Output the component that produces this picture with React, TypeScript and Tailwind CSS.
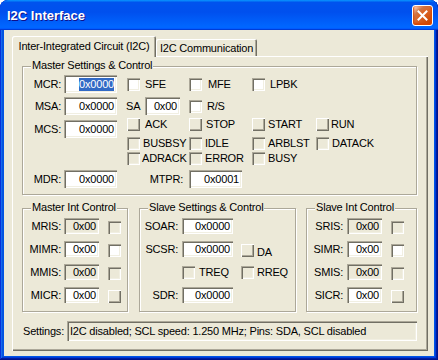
import React from "react";

// classic 3D edges used all over the dialog
const face = "bg-[#ECE9D8]";
const sunken =
  "shadow-[inset_1px_1px_#ACA899,inset_2px_2px_#716F64,inset_-1px_-1px_#FFFFFF,inset_-2px_-2px_#F1EFE2]";
const raised = "shadow-[inset_1px_1px_#FFFFFF,inset_-1px_-1px_#716F64,inset_-2px_-2px_#ACA899]";
const etched = "border border-[#ACA899] shadow-[inset_1px_1px_#FFFFFF,1px_1px_#FFFFFF]";

function cx(...c: (string | false | undefined)[]) {
  return c.filter(Boolean).join(" ");
}

type FieldProps = {
  value: string;
  className: string;
  gray?: boolean;
  selected?: boolean;
  left?: boolean;
};

function Field({ value, className, gray, selected, left }: FieldProps) {
  return (
    <div
      className={cx(
        "flex shrink-0 items-center leading-[13px] whitespace-nowrap overflow-hidden",
        left ? "justify-start pl-[3px]" : "justify-end pr-[3px]",
        sunken,
        gray ? face : "bg-white",
        className,
      )}
    >
      {selected ? <span className="bg-[#316AC5] text-white">{value}</span> : value}
    </div>
  );
}

function Label({ text, className }: { text: string; className: string }) {
  return <div className={cx("shrink-0 text-right leading-[13px]", className)}>{text}</div>;
}

type CheckProps = {
  label?: string;
  gray?: boolean;
  push?: boolean;
  gap?: string;
  className?: string;
};

function Check({ label, gray, push, gap = "ml-[5px]", className }: CheckProps) {
  return (
    <div className={cx("flex shrink-0 items-center", className)}>
      <span
        className={cx(
          "block h-[13px] w-[13px] shrink-0",
          push ? raised : sunken,
          push || gray ? face : "bg-white",
        )}
      />
      {label && <span className={cx("leading-[13px]", gap)}>{label}</span>}
    </div>
  );
}

function Group({
  title,
  className,
  children,
}: {
  title: string;
  className: string;
  children: React.ReactNode;
}) {
  return (
    <div className={cx("relative shrink-0", etched, className)}>
      <span className="absolute -top-[8px] left-[8px] bg-[#ECE9D8] px-[1px] leading-[13px]">
        {title}
      </span>
      {children}
    </div>
  );
}

function IntRow({
  name,
  value,
  gray,
  push,
  labelW,
}: {
  name: string;
  value: string;
  gray?: boolean;
  push?: boolean;
  labelW: string;
}) {
  return (
    <div className="flex h-[16px] items-center">
      <Label text={name} className={labelW} />
      <Field value={value} gray={gray} className="h-[16px] w-[35px]" />
      <Check gray={gray} push={push} className="ml-[9px] self-end" />
    </div>
  );
}

function CloseButton() {
  return (
    <div className="flex h-[21px] w-[21px] items-center justify-center rounded-[3px] border border-white bg-[radial-gradient(circle_at_90%_90%,#cc4600_0%,#dc6527_55%,#cd7546_70%,#ffccb2_90%,#ffffff_100%)] shadow-[inset_0_-1px_2px_1px_#da4600]">
      <svg width="11" height="11" viewBox="0 0 11 11">
        <path d="M1.5 1.5L9.5 9.5M9.5 1.5L1.5 9.5" stroke="#fff" strokeWidth="2" strokeLinecap="square" />
      </svg>
    </div>
  );
}

export default function App() {
  return (
    <div className="flex h-[360px] w-[438px] flex-col overflow-hidden rounded-t-[8px] bg-[#0055E5] font-['Liberation_Sans',Arial,sans-serif] text-[11px] tracking-[-0.2px] text-black shadow-[inset_-1px_-1px_#00138C,inset_1px_1px_#0831D9,inset_-2px_-2px_#001EA0,inset_2px_2px_#166AEE,inset_-3px_-3px_#003BDA,inset_3px_3px_#0855DD]">
      {/* title bar */}
      <div className="flex h-[30px] shrink-0 items-center justify-between rounded-t-[8px] bg-[linear-gradient(180deg,#0997ff,#0053ee_8%,#0050ee_40%,#0066ff_88%,#0066ff_93%,#005bff_95%,#003dd7_96%,#003dd7)] pl-[7px] pr-[5px]">
        <span className="pt-[1px] text-[13px] font-bold tracking-normal text-white [text-shadow:1px_1px_#0F1089]">
          I2C Interface
        </span>
        <CloseButton />
      </div>

      {/* client area */}
      <div className="mx-[4px] mb-[4px] flex flex-1 flex-col bg-[#ECE9D8]">
        {/* tabs */}
        <div className="ml-[8px] mt-[6px] flex h-[20px] items-end">
          <div className="relative z-10 -mb-[1px] flex h-[21px] w-[144px] justify-center rounded-t-[2px] bg-[#ECE9D8] pt-[3px] leading-[14px] shadow-[inset_1px_1px_#FFFFFF,inset_-1px_0_#716F64,inset_-2px_0_#ACA899]">
            Inter-Integrated Circuit (I2C)
          </div>
          <div className="flex h-[17px] w-[101px] justify-center rounded-t-[2px] pt-[2px] leading-[14px] shadow-[inset_1px_1px_#FFFFFF,inset_-1px_0_#716F64,inset_-2px_0_#ACA899]">
            I2C Communication
          </div>
        </div>

        {/* tab panel */}
        <div className="ml-[8px] flex h-[295px] w-[416px] flex-col pl-[10px] pt-[10px] shadow-[inset_1px_1px_#FFFFFF,inset_-1px_-1px_#716F64,inset_-2px_-2px_#ACA899]">
          <Group title="Master Settings & Control" className="w-[395px] pb-[6px] pt-[8px]">
            {/* MCR */}
            <div className="flex h-[18px] items-center">
              <Label text="MCR:" className="w-[41px] pr-[3px]" />
              <Field value="0x0000" selected className="h-[18px] w-[53px]" />
              <div className="ml-[10px] flex">
                <Check label="SFE" className="w-[62px]" />
                <Check label="MFE" gap="ml-[6px]" className="w-[63px]" />
                <Check label="LPBK" className="w-[64px]" />
              </div>
            </div>

            {/* MSA */}
            <div className="mt-[4px] flex h-[18px] items-center">
              <Label text="MSA:" className="w-[41px] pr-[3px]" />
              <Field value="0x0000" className="h-[18px] w-[53px]" />
              <div className="ml-[9px] w-[19px] leading-[13px]">SA</div>
              <Field value="0x00" className="h-[18px] w-[35px]" />
              <Check label="R/S" className="ml-[9px]" />
            </div>

            {/* MCS + status bits */}
            <div className="mt-[3px] flex items-start">
              <div className="mt-[2px] flex h-[18px] items-center">
                <Label text="MCS:" className="w-[41px] pr-[3px]" />
                <Field value="0x0000" className="h-[18px] w-[53px]" />
              </div>
              <div className="ml-[10px] flex flex-col">
                <div className="flex h-[13px]">
                  <Check push label="ACK" gap="ml-[5px]" className="w-[62px]" />
                  <Check push label="STOP" gap="ml-[4px]" className="w-[63px]" />
                  <Check push label="START" gap="ml-[3px]" className="w-[64px]" />
                  <Check push label="RUN" gap="ml-[2px]" />
                </div>
                <div className="mt-[6px] flex h-[13px]">
                  <Check gray label="BUSBSY" gap="ml-[3px]" className="w-[62px]" />
                  <Check gray label="IDLE" gap="ml-[3px]" className="w-[63px]" />
                  <Check gray label="ARBLST" gap="ml-[3px]" className="w-[64px]" />
                  <Check gray label="DATACK" gap="ml-[3px]" />
                </div>
                <div className="mt-[2px] flex h-[13px]">
                  <Check gray label="ADRACK" gap="ml-[2px]" className="w-[62px]" />
                  <Check gray label="ERROR" gap="ml-[3px]" className="w-[63px]" />
                  <Check gray label="BUSY" gap="ml-[3px]" className="w-[64px]" />
                </div>
              </div>
            </div>

            {/* MDR / MTPR */}
            <div className="mt-[5px] flex h-[18px] items-center">
              <Label text="MDR:" className="w-[41px] pr-[3px]" />
              <Field value="0x0000" className="h-[18px] w-[53px]" />
              <Label text="MTPR:" className="w-[72px] pr-[6px]" />
              <Field value="0x0001" className="h-[18px] w-[53px]" />
            </div>
          </Group>

          <div className="mt-[13px] flex">
            <Group title="Master Int Control" className="flex w-[106px] flex-col gap-[7px] pb-[8px] pt-[9px]">
              <IntRow name="MRIS:" value="0x00" gray labelW="w-[41px] pr-[3px]" />
              <IntRow name="MIMR:" value="0x00" labelW="w-[41px] pr-[3px]" />
              <IntRow name="MMIS:" value="0x00" gray labelW="w-[41px] pr-[3px]" />
              <IntRow name="MICR:" value="0x00" push labelW="w-[41px] pr-[3px]" />
            </Group>

            <Group title="Slave Settings & Control" className="ml-[11px] flex w-[157px] flex-col gap-[7px] pb-[8px] pt-[9px]">
              <div className="flex h-[16px] items-center">
                <Label text="SOAR:" className="w-[42px] pr-[4px]" />
                <Field value="0x0000" className="h-[16px] w-[51px]" />
              </div>
              <div className="flex h-[16px] items-center">
                <Label text="SCSR:" className="w-[42px] pr-[4px]" />
                <Field value="0x0000" className="h-[16px] w-[51px]" />
                <div className="ml-[8px] flex items-end self-end">
                  <Check push />
                  <span className="-mb-[2px] ml-[3px] leading-[13px]">DA</span>
                </div>
              </div>
              <div className="flex h-[16px] items-center pl-[42px]">
                <Check gray label="TREQ" gap="ml-[4px]" className="w-[59px]" />
                <Check gray label="RREQ" gap="ml-[3px]" />
              </div>
              <div className="flex h-[16px] items-center">
                <Label text="SDR:" className="w-[42px] pr-[4px]" />
                <Field value="0x0000" className="h-[16px] w-[51px]" />
              </div>
            </Group>

            <Group title="Slave Int Control" className="ml-[10px] flex w-[111px] flex-col gap-[7px] pb-[8px] pt-[9px]">
              <IntRow name="SRIS:" value="0x00" gray labelW="w-[40px] pr-[4px]" />
              <IntRow name="SIMR:" value="0x00" labelW="w-[40px] pr-[4px]" />
              <IntRow name="SMIS:" value="0x00" gray labelW="w-[40px] pr-[4px]" />
              <IntRow name="SICR:" value="0x00" push labelW="w-[40px] pr-[4px]" />
            </Group>
          </div>

          {/* status line */}
          <div className="mt-[9px] flex h-[20px] items-center">
            <div className="ml-[1px] w-[44px] shrink-0 leading-[13px]">Settings:</div>
            <Field
              value="I2C disabled; SCL speed: 1.250 MHz; Pins: SDA, SCL disabled"
              gray
              left
              className="h-[20px] w-[350px]"
            />
          </div>
        </div>
      </div>
    </div>
  );
}
